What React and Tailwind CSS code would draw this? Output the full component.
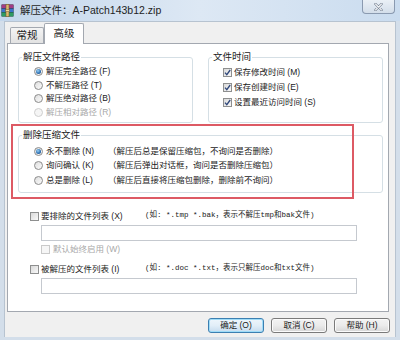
import React from "react";

function RarIcon() {
  return (
    <svg width="13" height="13" viewBox="0 0 13 13">
      <rect x="0.75" y="0.75" width="11.5" height="3.8" fill="#a33c86" stroke="#4b1d40" strokeWidth="0.5" />
      <rect x="0.75" y="4.55" width="11.5" height="3.8" fill="#3b74c9" stroke="#1c3660" strokeWidth="0.5" />
      <rect x="0.75" y="8.35" width="11.5" height="3.9" fill="#2e9c63" stroke="#174d30" strokeWidth="0.5" />
      <rect x="5" y="0.25" width="3" height="12.5" fill="#dcb970" stroke="#6d5222" strokeWidth="0.5" />
      <rect x="4.6" y="5.3" width="3.8" height="2.4" fill="#efd89a" stroke="#6d5222" strokeWidth="0.5" />
    </svg>
  );
}

function Radio({ checked, disabled }) {
  return (
    <span
      className={
        disabled
          ? "w-[9px] h-[9px] rounded-full border border-[#cfcfcf] bg-[#f5f5f5] flex items-center justify-center shrink-0"
          : "w-[9px] h-[9px] rounded-full border border-[#8c8c8c] bg-gradient-to-br from-[#dedede] to-[#fbfbfb] flex items-center justify-center shrink-0"
      }
    >
      {checked && (
        <span className="w-[5px] h-[5px] rounded-full bg-[radial-gradient(circle_at_40%_35%,#9ad2f6,#2a6db0_60%,#173f70)]" />
      )}
    </span>
  );
}

function Check({ checked, disabled }) {
  return (
    <span
      className={
        disabled
          ? "w-[9px] h-[9px] border border-[#cacaca] bg-[#f6f6f6] flex items-center justify-center shrink-0"
          : "w-[9px] h-[9px] border border-[#8e8f8f] bg-gradient-to-br from-[#d9d9d9] to-[#f9f9f9] flex items-center justify-center shrink-0"
      }
    >
      {checked && (
        <svg width="7" height="7" viewBox="0 0 7 7">
          <path d="M1 3.6 L2.8 5.6 L6.2 1" stroke="#2f477a" strokeWidth="1.3" fill="none" />
        </svg>
      )}
    </span>
  );
}

function Group({ title, className, children }) {
  return (
    <div className={"relative border border-[#d5dfe5] rounded-[3px] " + className}>
      <span className="absolute left-[3px] top-[-7px] px-[1px] bg-white text-[9.5px] leading-[12px] text-[#1a1a1a]">
        {title}
      </span>
      {children}
    </div>
  );
}

function Button({ children, primary }) {
  return (
    <div
      className={
        primary
          ? "w-[56px] h-[15px] rounded-[3px] border border-[#3c7fb1] shadow-[inset_0_0_0_1px_#9fdcf8] bg-gradient-to-b from-[#eef6fc] via-[#e2eef8] to-[#c6dcee] text-[8.5px] leading-none flex items-center justify-center"
          : "w-[56px] h-[15px] rounded-[3px] border border-[#7a7a7a] shadow-[inset_0_0_0_1px_#fbfbfb] bg-gradient-to-b from-[#f3f3f3] via-[#ebebeb] to-[#d6d6d6] text-[8.5px] leading-none flex items-center justify-center"
      }
    >
      {children}
    </div>
  );
}

export default function App() {
  return (
    <div className="w-[400px] h-[340px] overflow-hidden bg-[#d3deea] font-['Liberation_Sans','Noto_Sans_CJK_SC',sans-serif] text-[#1a1a1a] flex flex-col">
      {/* title bar */}
      <div className="h-[21px] shrink-0 flex items-start bg-gradient-to-r from-[#c4d7ec] via-[#dde8f4] to-[#cadcef]">
        <div className="pl-[1px] pt-[4px]">
          <RarIcon />
        </div>
        <div className="ml-[6px] mt-[2px] text-[10.5px] leading-[16px] text-[#1e1e1e]">
          解压文件：A-Patch143b12.zip
        </div>
        <div className="ml-auto mr-[5px] w-[33px] h-[14px] border border-t-0 border-[#8a9ab0] rounded-b-[4px] bg-gradient-to-b from-[#eaf0f6] to-[#d3deea] flex items-center justify-center">
          <svg width="9" height="8" viewBox="0 0 9 8">
            <path d="M1.5 1 L7.5 7 M7.5 1 L1.5 7" stroke="#6b7787" strokeWidth="2.4" strokeLinecap="round" />
            <path d="M1.5 1 L7.5 7 M7.5 1 L1.5 7" stroke="#f4f6f8" strokeWidth="1.1" strokeLinecap="round" />
          </svg>
        </div>
      </div>

      {/* client area */}
      <div className="mx-[4px] h-[316px] shrink-0 bg-[#f0f0f0] border-x border-t border-[#b7c3d0] flex flex-col">
        {/* tabs */}
        <div className="h-[21px] pt-[2px] pl-[5px] flex items-end">
          <div className="w-[34px] h-[16px] border border-b-0 border-[#a3a8b0] rounded-t-[2px] bg-gradient-to-b from-[#f4f4f4] to-[#e2e2e2] text-[10.5px] leading-none flex items-center justify-center">
            常规
          </div>
          <div className="relative z-10 -mb-px w-[40px] h-[21px] border border-b-0 border-[#a3a8b0] rounded-t-[2px] bg-white text-[10.5px] leading-none flex items-center justify-center pb-[2px]">
            高级
          </div>
        </div>

        {/* tab panel */}
        <div className="relative ml-[2px] w-[382px] h-[269px] bg-white border border-[#a3a8b0] pt-[13px] pl-[10px] pr-[5px] text-[8.5px]">
          <div className="flex gap-[15px]">
            <Group title="解压文件路径" className="w-[175px] h-[66px] pt-[7px] pl-[15px]">
              {[
                ["解压完全路径 (F)", true, false],
                ["不解压路径 (T)", false, false],
                ["解压绝对路径 (B)", false, false],
                ["解压相对路径 (R)", false, true],
              ].map(([t, c, d]) => (
                <div key={t} className="h-[13.5px] flex items-center gap-[3px]">
                  <Radio checked={c} disabled={d} />
                  <span className={d ? "text-[#a8a8a8]" : ""}>{t}</span>
                </div>
              ))}
            </Group>
            <Group title="文件时间" className="flex-1 h-[66px] pt-[6.5px] pl-[14px]">
              {["保存修改时间 (M)", "保存创建时间 (E)", "设置最近访问时间 (S)"].map((t) => (
                <div key={t} className="h-[15px] flex items-center gap-[2px]">
                  <Check checked />
                  <span>{t}</span>
                </div>
              ))}
            </Group>
          </div>

          <Group title="删除压缩文件" className="mt-[12px] h-[58px] pt-[8px] pl-[15px]">
            {[
              ["永不删除 (N)", "（解压后总是保留压缩包，不询问是否删除）", true],
              ["询问确认 (K)", "（解压后弹出对话框，询问是否删除压缩包）", false],
              ["总是删除 (L)", "（解压后直接将压缩包删除，删除前不询问）", false],
            ].map(([t, e, c]) => (
              <div key={t} className="h-[14.5px] flex items-center gap-[3px]">
                <Radio checked={c} />
                <span className="w-[59px]">{t}</span>
                <span>{e}</span>
              </div>
            ))}
          </Group>

          {/* lower section */}
          <div className="mt-[16px] ml-[12px]">
            <div className="h-[14px] flex items-center gap-[2px]">
              <Check />
              <span className="w-[102px]">要排除的文件列表 (X)</span>
              <span className="font-['Liberation_Mono','Noto_Sans_CJK_SC',monospace] text-[7.5px]">
                (如: *.tmp *.bak，表示不解压tmp和bak文件)
              </span>
            </div>
            <div className="mt-[2px] ml-[11px] w-[316px] h-[16px] border border-[#c5c9cf] bg-white" />
            <div className="mt-[2px] ml-[11px] h-[12px] flex items-center gap-[3px] text-[#a8a8a8]">
              <Check disabled />
              <span>默认始终启用 (W)</span>
            </div>
            <div className="mt-[7px] h-[14px] flex items-center gap-[2px]">
              <Check />
              <span className="w-[102px]">被解压的文件列表 (I)</span>
              <span className="font-['Liberation_Mono','Noto_Sans_CJK_SC',monospace] text-[7.5px]">
                (如: *.doc *.txt，表示只解压doc和txt文件)
              </span>
            </div>
            <div className="mt-[2px] ml-[11px] w-[316px] h-[16px] border border-[#c5c9cf] bg-white" />
          </div>

          {/* red highlight annotation */}
          <div className="absolute left-[3px] top-[80px] w-[343px] h-[75px] border-2 border-[#dd5a64] pointer-events-none" />
        </div>

        {/* buttons */}
        <div className="mt-[6px] pr-[5px] flex justify-end gap-[7px]">
          <Button primary>确定 (O)</Button>
          <Button>取消 (C)</Button>
          <Button>帮助 (H)</Button>
        </div>
      </div>
    </div>
  );
}
